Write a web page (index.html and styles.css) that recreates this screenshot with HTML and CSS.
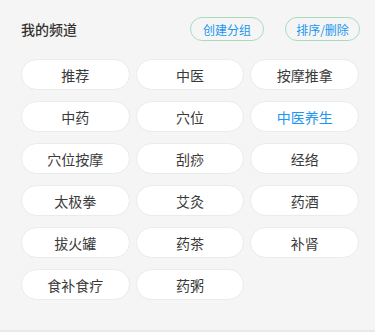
FILE: index.html
```html
<!DOCTYPE html>
<html lang="zh">
<head>
<meta charset="utf-8">
<link rel="stylesheet" href="styles.css">
</head>
<body>
<div class="page">
  <div class="header">
    <div class="title">我的频道</div>
    <div class="actions">
      <div class="btn">创建分组</div>
      <div class="btn">排序/删除</div>
    </div>
  </div>
  <div class="grid">
    <div class="tag">推荐</div>
    <div class="tag">中医</div>
    <div class="tag">按摩推拿</div>
    <div class="tag">中药</div>
    <div class="tag">穴位</div>
    <div class="tag active">中医养生</div>
    <div class="tag">穴位按摩</div>
    <div class="tag">刮痧</div>
    <div class="tag">经络</div>
    <div class="tag">太极拳</div>
    <div class="tag">艾灸</div>
    <div class="tag">药酒</div>
    <div class="tag">拔火罐</div>
    <div class="tag">药茶</div>
    <div class="tag">补肾</div>
    <div class="tag">食补食疗</div>
    <div class="tag">药粥</div>
  </div>
</div>
</body>
</html>
```

FILE: styles.css
```css
html, body {
  margin: 0;
  padding: 0;
  background: #f5f5f5;
}
.page {
  width: 375px;
  height: 332px;
  box-sizing: border-box;
  border-bottom: 2px solid #e9e9e9;
  font-family: "Noto Sans CJK SC", "Noto Sans", sans-serif;
  padding: 17px 15px 0 21px;
}
.header {
  display: flex;
  justify-content: space-between;
  align-items: center;
  height: 24px;
}
.title {
  font-size: 14px;
  font-weight: 500;
  color: #333;
}
.actions {
  display: flex;
  gap: 21px;
}
.btn {
  box-sizing: border-box;
  width: 74px;
  height: 24px;
  border: 1px solid #a9dcbf;
  border-radius: 12px;
  color: #2196f0;
  font-size: 12px;
  display: flex;
  align-items: center;
  justify-content: center;
}
.btn + .btn {
  width: 75px;
}
.grid {
  margin-top: 18px;
  width: 338px;
  display: grid;
  grid-template-columns: repeat(3, 1fr);
  column-gap: 6px;
  row-gap: 11px;
}
.tag {
  box-sizing: border-box;
  height: 31px;
  background: #fff;
  border: 1px solid #ebebeb;
  border-radius: 16px;
  display: flex;
  align-items: center;
  justify-content: center;
  font-size: 14px;
  color: #3a3a3a;
}
.tag.active {
  color: #2196f0;
}
```
